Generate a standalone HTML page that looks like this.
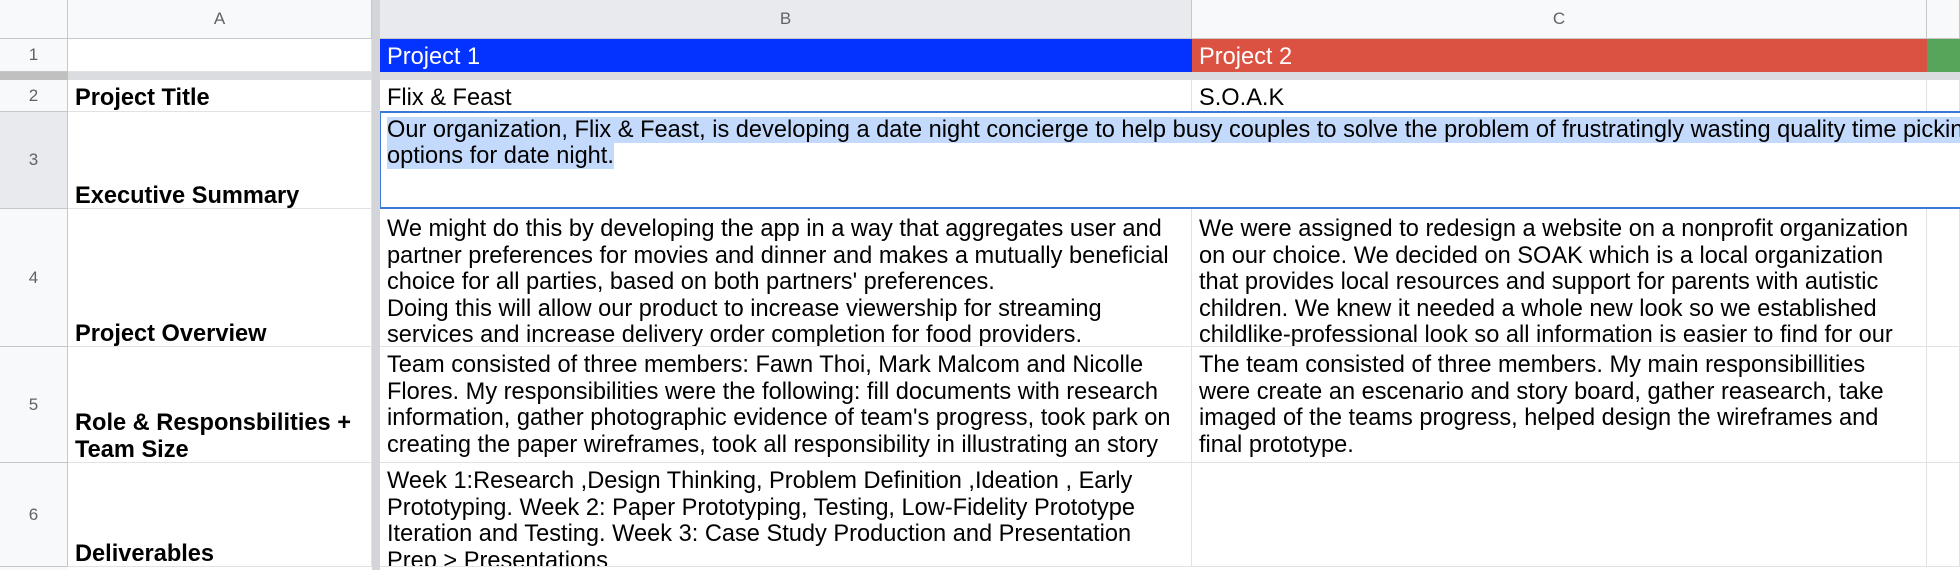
<!DOCTYPE html>
<html><head><meta charset="utf-8"><style>
*{margin:0;padding:0;box-sizing:border-box}
body{width:1960px;height:570px;overflow:hidden;background:#fff;font-family:"Liberation Sans",Arial,sans-serif;position:relative}
.a{position:absolute}
.hd{background:#f8f9fa;color:#5f6368;font-size:17px;text-align:center;border-right:1px solid #c7c7c7;border-bottom:1px solid #c7c7c7}
.rn{background:#f8f9fa;color:#5f6368;font-size:17px;border-right:1px solid #c7c7c7;border-bottom:1px solid #c7c7c7;display:flex;align-items:center;justify-content:center}
.c{border-right:1px solid #e2e2e2;border-bottom:1px solid #e2e2e2;overflow:hidden;font-size:23.6px;line-height:26.5px;color:#000}
.t{padding:5px 0 0 7px;white-space:nowrap}
.lab{font-weight:bold;display:flex;flex-direction:column;justify-content:flex-end;padding:0 0 0 7px;line-height:26.5px}
.lab span{position:relative;top:1px}
</style></head><body>
<div class="a hd" style="left:0;top:0;width:68px;height:39px"></div>
<div class="a hd" style="left:68px;top:0;width:304px;height:39px;line-height:38px">A</div>
<div class="a hd" style="left:380px;top:0;width:812px;height:39px;line-height:38px;background:#e8eaed">B</div>
<div class="a hd" style="left:1192px;top:0;width:735px;height:39px;line-height:38px">C</div>
<div class="a hd" style="left:1927px;top:0;width:33px;height:39px"></div>
<div class="a rn" style="left:0;top:39px;width:68px;height:33px">1</div>
<div class="a c" style="left:68px;top:39px;width:304px;height:33px"></div>
<div class="a" style="left:380px;top:39px;width:812px;height:33px;background:#0433ff;color:#fff;font-size:23.6px;line-height:36px;padding-left:7px;overflow:hidden">Project 1</div>
<div class="a" style="left:1192px;top:39px;width:735px;height:33px;background:#db5142;color:#fff;font-size:23.6px;line-height:36px;padding-left:7px;overflow:hidden">Project 2</div>
<div class="a" style="left:1927px;top:39px;width:33px;height:33px;background:#57a55a"></div>
<div class="a" style="left:0;top:72px;width:1960px;height:8px;background:#dadce0"></div>
<div class="a" style="left:0;top:72px;width:68px;height:8px;background:#c0c0c0"></div>
<div class="a rn" style="left:0;top:80px;width:68px;height:32px">2</div>
<div class="a c lab" style="left:68px;top:80px;width:304px;height:32px"><span style="top:0">Project Title</span></div>
<div class="a c t" style="left:380px;top:80px;width:812px;height:32px;padding-top:5px">Flix &amp; Feast</div>
<div class="a c t" style="left:1192px;top:80px;width:735px;height:32px;padding-top:5px">S.O.A.K</div>
<div class="a c" style="left:1927px;top:80px;width:33px;height:32px"></div>
<div class="a rn" style="left:0;top:112px;width:68px;height:97px;background:#e8eaed">3</div>
<div class="a c lab" style="left:68px;top:112px;width:304px;height:97px"><span>Executive Summary</span></div>
<div class="a" style="left:379px;top:111px;width:1590px;height:98px;border:2.5px solid #3b78d8;background:#fff;font-size:23.6px;line-height:26px;padding:4px 0 0 6px;white-space:nowrap;overflow:hidden"><span style="background:#c3dafc">Our organization, Flix &amp; Feast, is developing a date night concierge to help busy couples to solve the problem of frustratingly wasting quality time picking</span><br><span style="background:#c3dafc">options for date night.</span></div>
<div class="a rn" style="left:0;top:209px;width:68px;height:138px">4</div>
<div class="a c lab" style="left:68px;top:209px;width:304px;height:138px"><span>Project Overview</span></div>
<div class="a c t" style="left:380px;top:209px;width:812px;height:138px;padding-top:7px">We might do this by developing the app in a way that aggregates user and<br>partner preferences for movies and dinner and makes a mutually beneficial<br>choice for all parties, based on both partners' preferences.<br>Doing this will allow our product to increase viewership for streaming<br>services and increase delivery order completion for food providers.</div>
<div class="a c t" style="left:1192px;top:209px;width:735px;height:138px;padding-top:7px">We were assigned to redesign a website on a nonprofit organization<br>on our choice. We decided on SOAK which is a local organization<br>that provides local resources and support for parents with autistic<br>children. We knew it needed a whole new look so we established<br>childlike-professional look so all information is easier to find for our</div>
<div class="a c" style="left:1927px;top:209px;width:33px;height:138px"></div>
<div class="a rn" style="left:0;top:347px;width:68px;height:116px">5</div>
<div class="a c lab" style="left:68px;top:347px;width:304px;height:116px"><span>Role &amp; Responsbilities +<br>Team Size</span></div>
<div class="a c t" style="left:380px;top:347px;width:812px;height:116px">Team consisted of three members: Fawn Thoi, Mark Malcom and Nicolle<br>Flores. My responsibilities were the following: fill documents with research<br>information, gather photographic evidence of team's progress, took park on<br>creating the paper wireframes, took all responsibility in illustrating an story</div>
<div class="a c t" style="left:1192px;top:347px;width:735px;height:116px">The team consisted of three members. My main responsibillities<br>were create an escenario and story board, gather reasearch, take<br>imaged of the teams progress, helped design the wireframes and<br>final prototype.</div>
<div class="a c" style="left:1927px;top:347px;width:33px;height:116px"></div>
<div class="a rn" style="left:0;top:463px;width:68px;height:104px">6</div>
<div class="a c lab" style="left:68px;top:463px;width:304px;height:104px"><span>Deliverables</span></div>
<div class="a c t" style="left:380px;top:463px;width:812px;height:104px">Week 1:Research ,Design Thinking, Problem Definition ,Ideation , Early<br>Prototyping. Week 2: Paper Prototyping, Testing, Low-Fidelity Prototype<br>Iteration and Testing. Week 3: Case Study Production and Presentation<br>Prep &gt; Presentations</div>
<div class="a c" style="left:1192px;top:463px;width:735px;height:104px"></div>
<div class="a c" style="left:1927px;top:463px;width:33px;height:104px"></div>
<div class="a" style="left:0;top:567px;width:68px;height:3px;background:#f8f9fa"></div>
<div class="a" style="left:372px;top:0;width:8px;height:570px;background:#d3d5d9"></div>
</body></html>
